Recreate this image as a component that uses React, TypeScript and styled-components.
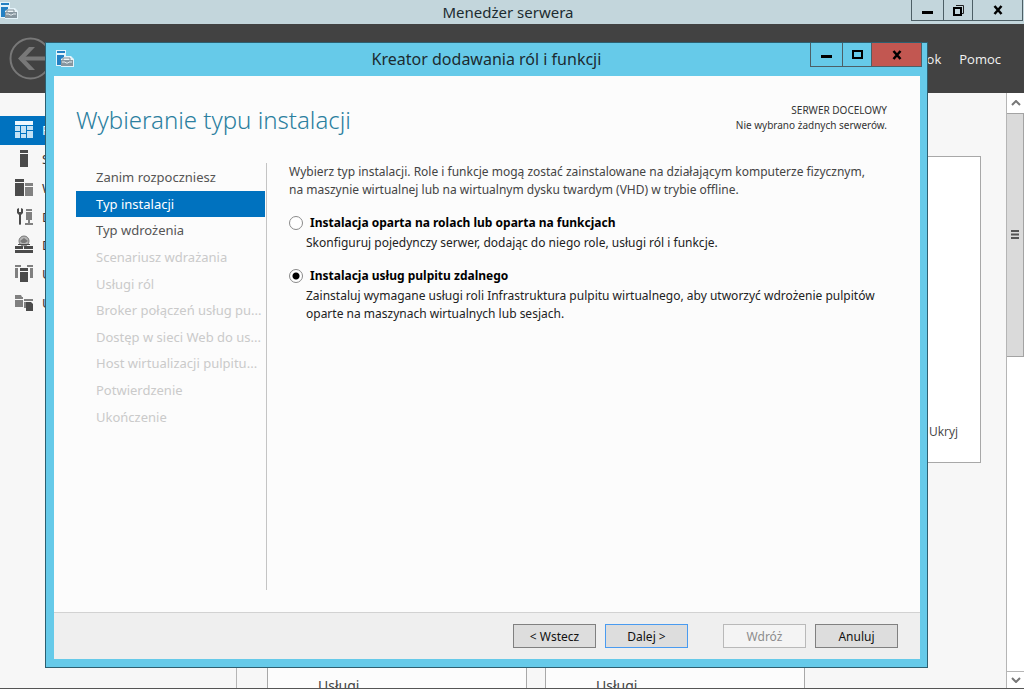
import React, { useState } from "react";
import styled, { createGlobalStyle, css } from "styled-components";

const FONT = `"Noto Sans", "Open Sans", sans-serif`;
const UI_FONT = `"Open Sans", "Noto Sans", sans-serif`;

const GlobalStyle = createGlobalStyle`
  *, *::before, *::after { box-sizing: border-box; }
  body { margin: 0; font-family: ${FONT}; overflow: hidden; }
  button, input { font-family: inherit; margin: 0; }
  ul, h1, h2, p { margin: 0; padding: 0; font-weight: 400; }
  ul { list-style: none; }
`;

const Desktop = styled.div`
  position: relative;
  display: flex;
  flex-direction: column;
  height: 100vh;
  overflow: hidden;
  background: #f7f7f7;
  border-bottom: 1px solid #555;
`;

/* ---- shared window chrome ---- */

const TitleBar = styled.header<{ $tall?: boolean }>`
  display: grid;
  grid-template-columns: ${(p) => (p.$tall ? "118px 1fr 118px" : "112px 1fr 120px")};
  flex: none;
  height: ${(p) => (p.$tall ? 33 : 24)}px;
  background: ${(p) => (p.$tall ? "#66cae9" : "#c3d6dc")};
`;

const TitleIcon = styled.div<{ $inset?: boolean }>`
  padding: ${(p) => (p.$inset ? "7px 0 0 10px" : "2px 0 0 0")};
`;

const TitleText = styled.h1<{ $tall?: boolean }>`
  font-size: ${(p) => (p.$tall ? 16 : 15)}px;
  line-height: ${(p) => (p.$tall ? 32 : 24)}px;
  color: #1c2b30;
  text-align: center;
  white-space: nowrap;
`;

const WindowButtons = styled.div<{ $tall?: boolean }>`
  display: grid;
  grid-template-columns: 31px 29px 1fr;
  justify-self: end;
  width: 112px;
  height: ${(p) => (p.$tall ? 24 : 21)}px;
  margin-right: ${(p) => (p.$tall ? 5 : 1)}px;
  border: 1px solid #4d5f66;
  border-top: 0;
`;

const WindowButton = styled.button<{ $close?: boolean }>`
  display: flex;
  align-items: center;
  justify-content: center;
  padding: 0;
  border: 0;
  border-left: 1px solid #4d5f66;
  background: ${(p) => (p.$close ? "#c25751" : "transparent")};
  &:first-child { border-left: 0; }
`;

/* ---- server manager ---- */

const Banner = styled.div`
  display: flex;
  flex: none;
  align-items: center;
  justify-content: space-between;
  height: 69px;
  padding: 0 23px 0 9px;
  background: #424242;
`;

const BackButton = styled.button`
  padding: 0;
  border: 0;
  background: none;
  line-height: 0;
`;

const Menu = styled.nav`
  display: flex;
  gap: 18px;
  font-family: ${UI_FONT};
  font-size: 13px;
`;

const MenuLink = styled.a`
  color: #f2f2f2;
  text-decoration: none;
`;

const Workspace = styled.div`
  display: flex;
  flex: 1;
  min-height: 0;
`;

const Sidebar = styled.nav`
  flex: none;
  width: 237px;
  padding-top: 23px;
  border-right: 1px solid #b5b5b5;
`;

const SidebarList = styled.ul`
  display: flex;
  flex-direction: column;
  height: 201px;
`;

const SidebarItem = styled.li<{ $active?: boolean }>`
  display: flex;
  flex: 1;
  align-items: center;
  gap: 8px;
  padding-left: 14px;
  font-size: 13px;
  line-height: 20px;
  color: ${(p) => (p.$active ? "#fff" : "#333")};
  background: ${(p) => (p.$active ? "#0072bf" : "transparent")};
`;

const Dashboard = styled.main`
  flex: 1;
  min-width: 0;
  padding: 63px 25px 0 30px;
  overflow: hidden;
`;

const WelcomeCard = styled.section`
  display: flex;
  align-items: flex-end;
  justify-content: flex-end;
  height: 307px;
  padding: 0 22px 21px;
  border: 1px solid #a8a8a8;
  background: #fff;
`;

const TextButton = styled.button`
  padding: 0;
  border: 0;
  background: none;
  font-family: ${UI_FONT};
  font-size: 12px;
  line-height: 18px;
  color: #444;
`;

const Tiles = styled.div`
  display: grid;
  grid-template-columns: repeat(2, 260px);
  gap: 18px;
  margin-top: 130px;
`;

const Tile = styled.section`
  height: 240px;
  padding: 82px 50px 0;
  border: 1px solid #a8a8a8;
  background: #fcfcfc;
  font-size: 14px;
  line-height: 20px;
  color: #444;
`;

const ScrollBar = styled.div`
  display: flex;
  flex: none;
  flex-direction: column;
  width: 18px;
  border-left: 1px solid #b5b5b5;
  background: #fff;
`;

const ScrollArrow = styled.button<{ $down?: boolean }>`
  display: flex;
  align-items: center;
  justify-content: center;
  height: 20px;
  padding: 0;
  border: 0;
  background: #fff;
  ${(p) => p.$down && css`
    height: 17px;
    margin-top: auto;
    border-top: 1px solid #b5b5b5;
  `}
`;

const ScrollThumb = styled.div`
  display: flex;
  align-items: center;
  justify-content: center;
  height: 41%;
  border: 1px solid #a3a3a3;
  border-width: 1px 1px 1px 0;
  background: #dadada;
`;

/* ---- wizard dialog ---- */

const Wizard = styled.div`
  position: absolute;
  inset: 42px 96px 20px 45px;
  display: flex;
  flex-direction: column;
  border: 1px solid #2d5f70;
  background: #66cae9;
`;

const WizardBody = styled.form`
  display: flex;
  flex: 1;
  flex-direction: column;
  min-height: 0;
  margin: 0 7px 8px 8px;
  background: #fcfcfc;
`;

const WizardHead = styled.div`
  display: flex;
  align-items: flex-start;
  justify-content: space-between;
  height: 87px;
  padding: 27px 33px 0 22px;
`;

const Heading = styled.h2`
  font-size: 24px;
  line-height: 34px;
  font-weight: 300;
  color: #2b7f9f;
  white-space: nowrap;
`;

const Destination = styled.p`
  font-size: 10px;
  line-height: 15px;
  color: #333;
  text-align: right;
`;

const Columns = styled.div`
  display: flex;
  flex: 1;
  min-height: 0;
  padding: 0 22px;
`;

const Steps = styled.ul`
  display: flex;
  flex: none;
  flex-direction: column;
  width: 189px;
  height: 266px;
  margin-top: 1px;
`;

const Step = styled.li<{ $state: "done" | "current" | "off" }>`
  display: flex;
  flex: 1;
  align-items: center;
  padding-left: 20px;
  font-size: 13px;
  line-height: 18px;
  white-space: nowrap;
  color: ${(p) => ({ done: "#555", current: "#fff", off: "#cacaca" })[p.$state]};
  background: ${(p) => (p.$state === "current" ? "#0072bf" : "transparent")};
`;

const Options = styled.div`
  flex: 1;
  min-width: 0;
  margin: 0 0 22px 1px;
  padding-left: 22px;
  border-left: 1px solid #c4c4c4;
  font-size: 12px;
  line-height: 18px;
  color: #222;
`;

const Intro = styled.p`
  color: #444;
`;

const Option = styled.div`
  margin-top: 13px;
`;

const OptionLabel = styled.label`
  display: flex;
  align-items: center;
  gap: 7px;
  height: 22px;
  font-weight: 700;
  color: #000;
`;

const Radio = styled.input`
  appearance: none;
  flex: none;
  width: 14px;
  height: 14px;
  border: 1px solid #8a8a8a;
  border-radius: 50%;
  background: #fff;
  &:checked {
    background: radial-gradient(circle, #000 3px, #fff 4px);
  }
`;

const OptionText = styled.p`
  padding-left: 17px;
`;

const WizardFoot = styled.footer`
  display: flex;
  flex: none;
  justify-content: flex-end;
  gap: 9px;
  height: 47px;
  padding: 11px 22px 0;
  border-top: 1px solid #d2d2d2;
  background: #efefef;
`;

const PushButton = styled.button<{ $primary?: boolean; $apart?: boolean }>`
  width: 83px;
  height: 24px;
  padding: 0;
  margin-left: ${(p) => (p.$apart ? 26 : 0)}px;
  border: 1px solid ${(p) => (p.$primary ? "#4a9bf0" : "#808080")};
  background: #dddddd;
  font-size: 12px;
  color: #111;
  &:disabled {
    border-color: #b9b9b9;
    background: #f4f4f4;
    color: #8c8c8c;
  }
`;

/* ---- drawings ---- */

const ServerIcon = () => (
  <svg width="18" height="18" viewBox="0 0 18 18" aria-hidden="true">
    <path d="M0 0h10v6h5l3 3v8H5v-1H0z" fill="#e3f3fa" />
    <path d="M1 1h8v2H1zM1 5h7v2L5 9v6H1z" fill="#2380c3" />
    <path d="M5 10l3-3h6l3 3v6H5z" fill="#eef4f7" />
    <path d="M7 10V8h7v2" fill="none" stroke="#7d8d96" />
    <path d="M5 10h12v6H5z" fill="#87969f" />
    <path d="M6 12h3l1 1h2l1-1h3" fill="none" stroke="#e4ecf0" />
  </svg>
);

const MinIcon = () => (
  <svg width="11" height="11" aria-hidden="true"><path d="M0 6h11v3H0z" fill="#000" /></svg>
);
const MaxIcon = () => (
  <svg width="11" height="11" aria-hidden="true"><path d="M1 2h9v7H1z" fill="none" stroke="#000" strokeWidth="2" /></svg>
);
const RestoreIcon = () => (
  <svg width="11" height="11" aria-hidden="true">
    <path d="M3 0.5h7.5v8H9" fill="none" stroke="#222" />
    <path d="M1 3h7v7H1z" fill="none" stroke="#000" strokeWidth="2" />
  </svg>
);
const CloseIcon = () => (
  <svg width="10" height="10" aria-hidden="true"><path d="M1.500 1l7 8M8.500 1l-7 8" stroke="#000" strokeWidth="2.500" /></svg>
);

const BackIcon = () => (
  <svg width="43" height="43" viewBox="0 0 43 43" fill="none" stroke="#787878" aria-hidden="true">
    <circle cx="21.500" cy="21.500" r="20" strokeWidth="2" />
    <path d="M36 21.500H11" strokeWidth="4" />
    <path d="M9 21.500L20 10h6L15 21.500 26 33h-6z" fill="#787878" stroke="none" />
  </svg>
);

const sideDrawings = [
  <g key="d"><path d="M1 1h18v4H1z" fill="#eef8fe" /><path d="M1 6h5v5H1zM7 6h5v7H7zM13 6h6v4h-6zM1 12h5v6H1zM7 14h5v4H7zM13 11h6v7h-6z" fill="#c3e2f5" /></g>,
  <g fill="#4b4b4b" key="s"><path d="M6 1h8v3H6zM6 5h8v13H6z" /></g>,
  <g key="w"><path d="M1 1h9v3H1zM1 5h9v13H1z" fill="#4b4b4b" /><path d="M11 5h8v3h-8zM11 9h8v9h-8z" fill="#828282" /></g>,
  <g key="h"><path d="M3 2l2-1v4h2V1l2 1v4L7 8v9q-1 2-2 0V8L3 6z" fill="#4b4b4b" /><path d="M12 2h6v2h-6zM12 5h6v8h-6zM14 13h2v3h3v2h-8v-2h3z" fill="#808080" /></g>,
  <g key="n"><circle cx="10" cy="6" r="5" fill="#b5b5b5" stroke="#777" /><path d="M6 6l4-3 4 3-3 2H8z" fill="#777" /><path d="M4 9h12v1H4zM1 11h8v3H1zM10 11h9v3h-9zM1 15h18v3H1z" fill="#4b4b4b" /></g>,
  <g key="u"><path d="M1 1h6v2H1zM13 1h6v2h-6zM1 4h3v10H1zM16 4h3v10h-3z" fill="#808080" /><path d="M6 4h8v3H6zM6 8h8v10H6z" fill="#4b4b4b" /></g>,
  <g key="f"><path d="M1 2h6l1 2h1v2H1zM1 7h8v7H1zM10 6h9v2h-9zM10 9h2v6h-2z" fill="#808080" /><path d="M12 9h5l2 2v7h-7z" fill="#4b4b4b" /></g>,
];

const sideLabels = ["P", "S", "W", "D", "D", "U", "U"];

const steps: Array<[string, "done" | "current" | "off"]> = [
  ["Zanim rozpoczniesz", "done"],
  ["Typ instalacji", "current"],
  ["Typ wdrożenia", "done"],
  ["Scenariusz wdrażania", "off"],
  ["Usługi ról", "off"],
  ["Broker połączeń usług pu...", "off"],
  ["Dostęp w sieci Web do us...", "off"],
  ["Host wirtualizacji pulpitu...", "off"],
  ["Potwierdzenie", "off"],
  ["Ukończenie", "off"],
];

const options = [
  {
    id: "roles",
    label: "Instalacja oparta na rolach lub oparta na funkcjach",
    text: "Skonfiguruj pojedynczy serwer, dodając do niego role, usługi ról i funkcje.",
  },
  {
    id: "rds",
    label: "Instalacja usług pulpitu zdalnego",
    text: "Zainstaluj wymagane usługi roli Infrastruktura pulpitu wirtualnego, aby utworzyć wdrożenie pulpitów oparte na maszynach wirtualnych lub sesjach.",
  },
];

export default function App() {
  const [choice, setChoice] = useState("rds");

  return (
    <Desktop>
      <GlobalStyle />
      <TitleBar>
        <TitleIcon><ServerIcon /></TitleIcon>
        <TitleText>Menedżer serwera</TitleText>
        <WindowButtons>
          <WindowButton aria-label="Minimalizuj"><MinIcon /></WindowButton>
          <WindowButton aria-label="Przywróć"><RestoreIcon /></WindowButton>
          <WindowButton aria-label="Zamknij"><CloseIcon /></WindowButton>
        </WindowButtons>
      </TitleBar>

      <Banner>
        <BackButton aria-label="Wstecz"><BackIcon /></BackButton>
        <Menu>
          <MenuLink href="#widok">Widok</MenuLink>
          <MenuLink href="#pomoc">Pomoc</MenuLink>
        </Menu>
      </Banner>

      <Workspace>
        <Sidebar>
          <SidebarList>
            {sideLabels.map((label, i) => (
              <SidebarItem key={i} $active={i === 0}>
                <svg width="20" height="20" viewBox="0 0 20 20" aria-hidden="true">{sideDrawings[i]}</svg>
                {label}
              </SidebarItem>
            ))}
          </SidebarList>
        </Sidebar>
        <Dashboard>
          <WelcomeCard><TextButton>Ukryj</TextButton></WelcomeCard>
          <Tiles>
            <Tile>Usługi</Tile>
            <Tile>Usługi</Tile>
          </Tiles>
        </Dashboard>
        <ScrollBar>
          <ScrollArrow aria-label="W górę">
            <svg width="10" height="6" aria-hidden="true"><path d="M1 5l4-4 4 4" fill="none" stroke="#777" strokeWidth="2" /></svg>
          </ScrollArrow>
          <ScrollThumb>
            <svg width="8" height="9" aria-hidden="true"><path d="M0 1h8M0 4.500h8M0 8h8" stroke="#555" strokeWidth="2" /></svg>
          </ScrollThumb>
          <ScrollArrow $down aria-label="W dół">
            <svg width="10" height="6" aria-hidden="true"><path d="M1 1l4 4 4-4" fill="none" stroke="#777" strokeWidth="2" /></svg>
          </ScrollArrow>
        </ScrollBar>
      </Workspace>

      <Wizard role="dialog" aria-labelledby="wizard-title">
        <TitleBar $tall>
          <TitleIcon $inset><ServerIcon /></TitleIcon>
          <TitleText $tall id="wizard-title">Kreator dodawania ról i funkcji</TitleText>
          <WindowButtons $tall>
            <WindowButton aria-label="Minimalizuj"><MinIcon /></WindowButton>
            <WindowButton aria-label="Maksymalizuj"><MaxIcon /></WindowButton>
            <WindowButton $close aria-label="Zamknij"><CloseIcon /></WindowButton>
          </WindowButtons>
        </TitleBar>
        <WizardBody onSubmit={(e) => e.preventDefault()}>
          <WizardHead>
            <Heading>Wybieranie typu instalacji</Heading>
            <Destination>
              SERWER DOCELOWY<br />Nie wybrano żadnych serwerów.
            </Destination>
          </WizardHead>
          <Columns>
            <Steps>
              {steps.map(([label, state]) => (
                <Step key={label} $state={state}>{label}</Step>
              ))}
            </Steps>
            <Options>
              <Intro>
                Wybierz typ instalacji. Role i funkcje mogą zostać zainstalowane na działającym komputerze fizycznym,
                <br />
                na maszynie wirtualnej lub na wirtualnym dysku twardym (VHD) w trybie offline.
              </Intro>
              {options.map((o) => (
                <Option key={o.id}>
                  <OptionLabel>
                    <Radio
                      type="radio"
                      name="install-type"
                      checked={choice === o.id}
                      onChange={() => setChoice(o.id)}
                    />
                    {o.label}
                  </OptionLabel>
                  <OptionText>{o.text}</OptionText>
                </Option>
              ))}
            </Options>
          </Columns>
          <WizardFoot>
            <PushButton type="button">&lt; Wstecz</PushButton>
            <PushButton type="submit" $primary>Dalej &gt;</PushButton>
            <PushButton type="button" $apart disabled>Wdróż</PushButton>
            <PushButton type="button">Anuluj</PushButton>
          </WizardFoot>
        </WizardBody>
      </Wizard>
    </Desktop>
  );
}
